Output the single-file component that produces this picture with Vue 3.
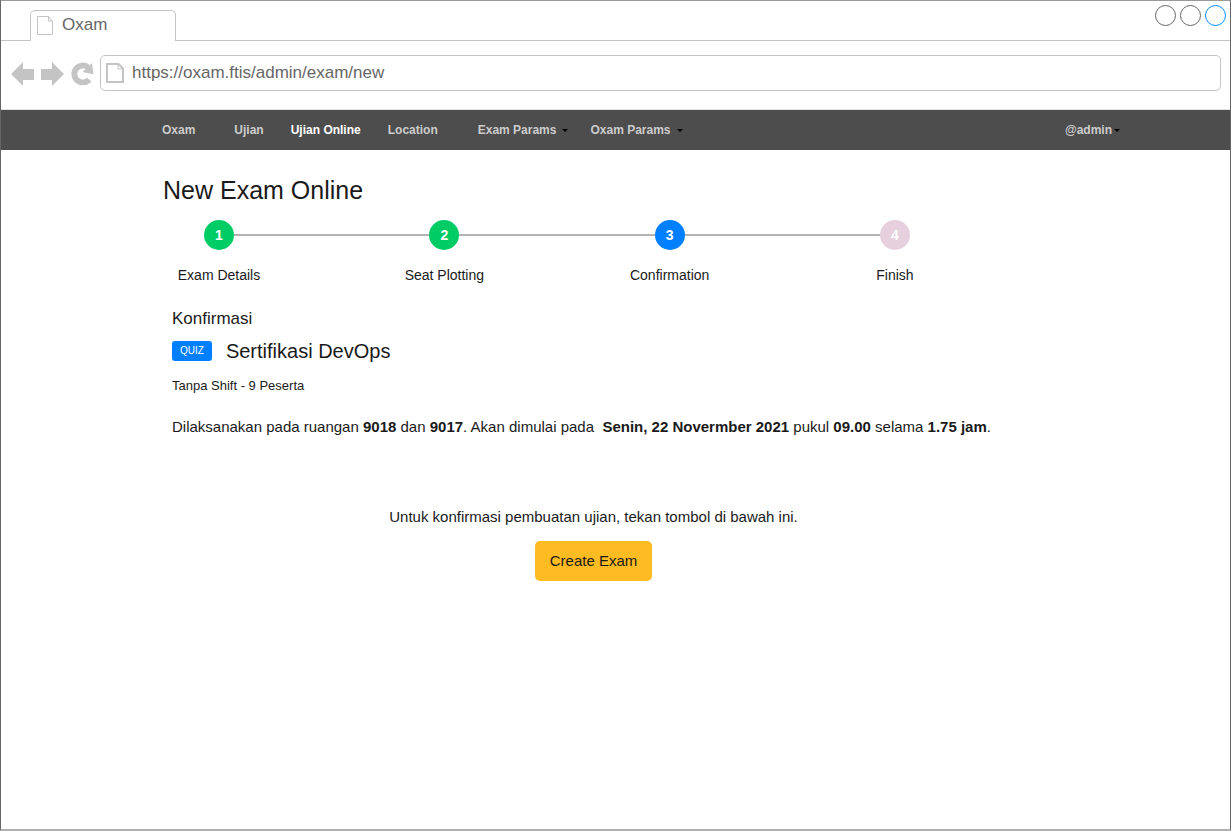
<script setup>
const links = [
  { label: 'Ujian', active: false },
  { label: 'Ujian Online', active: true },
  { label: 'Location', active: false },
]
const menus = ['Exam Params', 'Oxam Params']
const steps = [
  { label: 'Exam Details', state: 'done' },
  { label: 'Seat Plotting', state: 'done' },
  { label: 'Confirmation', state: 'current' },
  { label: 'Finish', state: 'pending' },
]
const url = 'https://oxam.ftis/admin/exam/new'
</script>

<template>
  <div class="window">
    <header class="tabs">
      <div class="lead"></div>
      <div class="tab">
        <svg width="16" height="20" viewBox="0 0 16 20" aria-hidden="true">
          <path d="M.5 .5H11.5L15.5 5V18.5H.5ZM11.5 .5V5H15.5" fill="none" stroke="#c4c4c4" />
        </svg>
        <span>Oxam</span>
      </div>
      <div class="controls">
        <button type="button" class="dot" aria-label="Minimize"></button>
        <button type="button" class="dot" aria-label="Maximize"></button>
        <button type="button" class="dot close" aria-label="Close"></button>
      </div>
    </header>

    <div class="toolbar">
      <button type="button" class="tool" aria-label="Back">
        <svg width="23" height="24" viewBox="0 0 23 24"><path d="M0 12L12 0V7H23V18H12V24Z" fill="#c4c4c4" /></svg>
      </button>
      <button type="button" class="tool" aria-label="Forward">
        <svg width="23" height="24" viewBox="0 0 23 24"><path d="M23 12L11 0V7H0V18H11V24Z" fill="#c4c4c4" /></svg>
      </button>
      <button type="button" class="tool" aria-label="Reload">
        <svg class="reload" width="22" height="24" viewBox="0 0 22 24">
          <path d="M18.2 17.6A8.5 8.5 0 1 1 17 5.2" fill="none" stroke="#c4c4c4" stroke-width="5.8" />
          <path d="M21 1L22.4 12.2L11.5 10Z" fill="#c4c4c4" />
        </svg>
      </button>
      <label class="address">
        <svg width="18" height="20" viewBox="0 0 18 20" aria-hidden="true">
          <path d="M1 1H12.5L17 5.5V19H1Z" fill="none" stroke="#c4c4c4" stroke-width="2" />
          <path d="M12 1V6H17" fill="none" stroke="#c4c4c4" />
        </svg>
        <input type="text" :value="url" aria-label="Address" />
      </label>
    </div>

    <nav class="navbar">
      <a href="#" class="brand">Oxam</a>
      <div class="links">
        <a v-for="l in links" :key="l.label" href="#" :class="{ active: l.active }">{{ l.label }}</a>
      </div>
      <div class="menus">
        <button v-for="m in menus" :key="m" type="button" class="menu">
          {{ m }}<span class="caret"></span>
        </button>
      </div>
      <button type="button" class="menu user">@admin<span class="caret"></span></button>
    </nav>

    <main class="page">
      <h1>New Exam Online</h1>
      <ol class="stepper">
        <template v-for="(s, i) in steps" :key="s.label">
          <li v-if="i" class="line" role="presentation"></li>
          <li class="step">
            <span class="num" :class="s.state">{{ i + 1 }}</span>
            <span>{{ s.label }}</span>
          </li>
        </template>
      </ol>

      <section class="summary">
        <h2>Konfirmasi</h2>
        <div class="exam">
          <span class="badge">QUIZ</span>
          <h3>Sertifikasi DevOps</h3>
        </div>
        <p class="shift">Tanpa Shift - 9 Peserta</p>
        <p class="detail">
          Dilaksanakan pada ruangan <b>9018</b> dan <b>9017</b>. Akan dimulai pada&nbsp;
          <b>Senin, 22 Novermber 2021</b> pukul <b>09.00</b> selama <b>1.75 jam</b>.
        </p>
      </section>

      <section class="confirm">
        <p>Untuk konfirmasi pembuatan ujian, tekan tombol di bawah ini.</p>
        <button type="button" class="create">Create Exam</button>
      </section>
    </main>
  </div>
</template>

<style>
body {
  background: #fff;
}
</style>

<style scoped>
.window,
.window * {
  box-sizing: border-box;
}
.window {
  min-height: calc(100vh - 1px);
  border: 1px solid #666;
  border-top-color: #999;
  border-bottom: 2px solid #b0b0b0;
  background: #fff;
  color: #1a1a1a;
  font-family: "Liberation Sans", Arial, sans-serif;
}
button,
input {
  margin: 0;
  padding: 0;
  border: 0;
  background: none;
  color: inherit;
  font: inherit;
}
button {
  cursor: pointer;
}
h1,
h2,
h3,
p,
ol {
  margin: 0;
  padding: 0;
  font-weight: 400;
}
.tabs {
  display: flex;
  align-items: flex-end;
  height: 40px;
}
.lead {
  width: 29px;
  border-bottom: 1px solid #c4c4c4;
}
.tab {
  display: flex;
  align-items: flex-start;
  gap: 9px;
  width: 146px;
  height: 31px;
  padding: 5px 6px;
  border: 1px solid #c4c4c4;
  border-bottom: 0;
  border-radius: 5px 5px 0 0;
  color: #666;
  font-size: 17px;
  line-height: 18px;
}
.controls {
  display: flex;
  flex: 1;
  justify-content: flex-end;
  gap: 4px;
  height: 40px;
  padding: 4px 4px 0 0;
  border-bottom: 1px solid #c4c4c4;
}
.dot {
  width: 21px;
  height: 21px;
  border: 1px solid #666;
  border-radius: 50%;
}
.close {
  border-color: #008cff;
}
.toolbar {
  display: flex;
  align-items: center;
  gap: 7px;
  height: 69px;
  padding: 0 9px 4px 10px;
  border-bottom: 1px solid #e0e0e0;
}
.tool {
  display: flex;
  padding-top: 2px;
}
.reload {
  overflow: visible;
}
.address {
  display: flex;
  flex: 1;
  align-items: center;
  gap: 8px;
  height: 36px;
  padding: 0 5px;
  border: 1px solid #c4c4c4;
  border-radius: 5px;
}
.address input {
  flex: 1;
  min-width: 0;
  outline: 0;
  color: #666;
  font-size: 17px;
}
.navbar {
  display: flex;
  align-items: center;
  height: 40px;
  padding: 0 110px 0 161px;
  background: #4d4d4d;
  color: #ccc;
  font-size: 12px;
  font-weight: 700;
}
.navbar a {
  color: inherit;
  text-decoration: none;
}
.navbar a.active {
  color: #fff;
}
.links {
  display: flex;
  gap: 27px;
  margin: 0 40px 0 39px;
}
.menus {
  display: flex;
  gap: 22px;
}
.menu {
  display: flex;
  align-items: center;
  gap: 6px;
}
.user {
  gap: 2px;
  margin-left: auto;
}
.caret {
  border: 3px solid transparent;
  border-top-color: #000;
  border-bottom: 0;
}
.page {
  max-width: 1023px;
  padding: 24px 0 24px 162px;
}
h1 {
  font-size: 25px;
  line-height: 32px;
}
.stepper {
  display: flex;
  max-width: 788px;
  margin-top: 14px;
  list-style: none;
  font-size: 14px;
  line-height: 20px;
}
.step {
  display: flex;
  flex: none;
  flex-direction: column;
  align-items: center;
  gap: 15px;
  width: 112px;
}
.line {
  flex: 1;
  height: 2px;
  margin: 14px -41px 0;
  background: #b3b3b3;
}
.num {
  width: 30px;
  height: 30px;
  border-radius: 50%;
  color: #fff;
  font-weight: 700;
  line-height: 30px;
  text-align: center;
}
.done {
  background: #00cc66;
}
.current {
  background: #007fff;
}
.pending {
  background: #e6d0de;
}
.summary {
  margin-top: 24px;
  padding-left: 9px;
}
h2 {
  font-size: 17px;
  line-height: 20px;
}
.exam {
  display: flex;
  align-items: center;
  gap: 14px;
  margin-top: 9px;
}
.badge {
  padding: 0 8px;
  border-radius: 3px;
  background: #007fff;
  color: #fff;
  font-size: 10px;
  line-height: 20px;
}
h3 {
  font-size: 20px;
  line-height: 26px;
}
.shift {
  margin-top: 12px;
  font-size: 13px;
  line-height: 20px;
}
.detail {
  margin-top: 21px;
  font-size: 15px;
  line-height: 20px;
}
.confirm {
  display: flex;
  flex-direction: column;
  align-items: center;
  gap: 14px;
  margin-top: 70px;
  font-size: 15px;
  line-height: 20px;
}
.create {
  padding: 10px 15px;
  border-radius: 5px;
  background: #ffbb22;
}
</style>
